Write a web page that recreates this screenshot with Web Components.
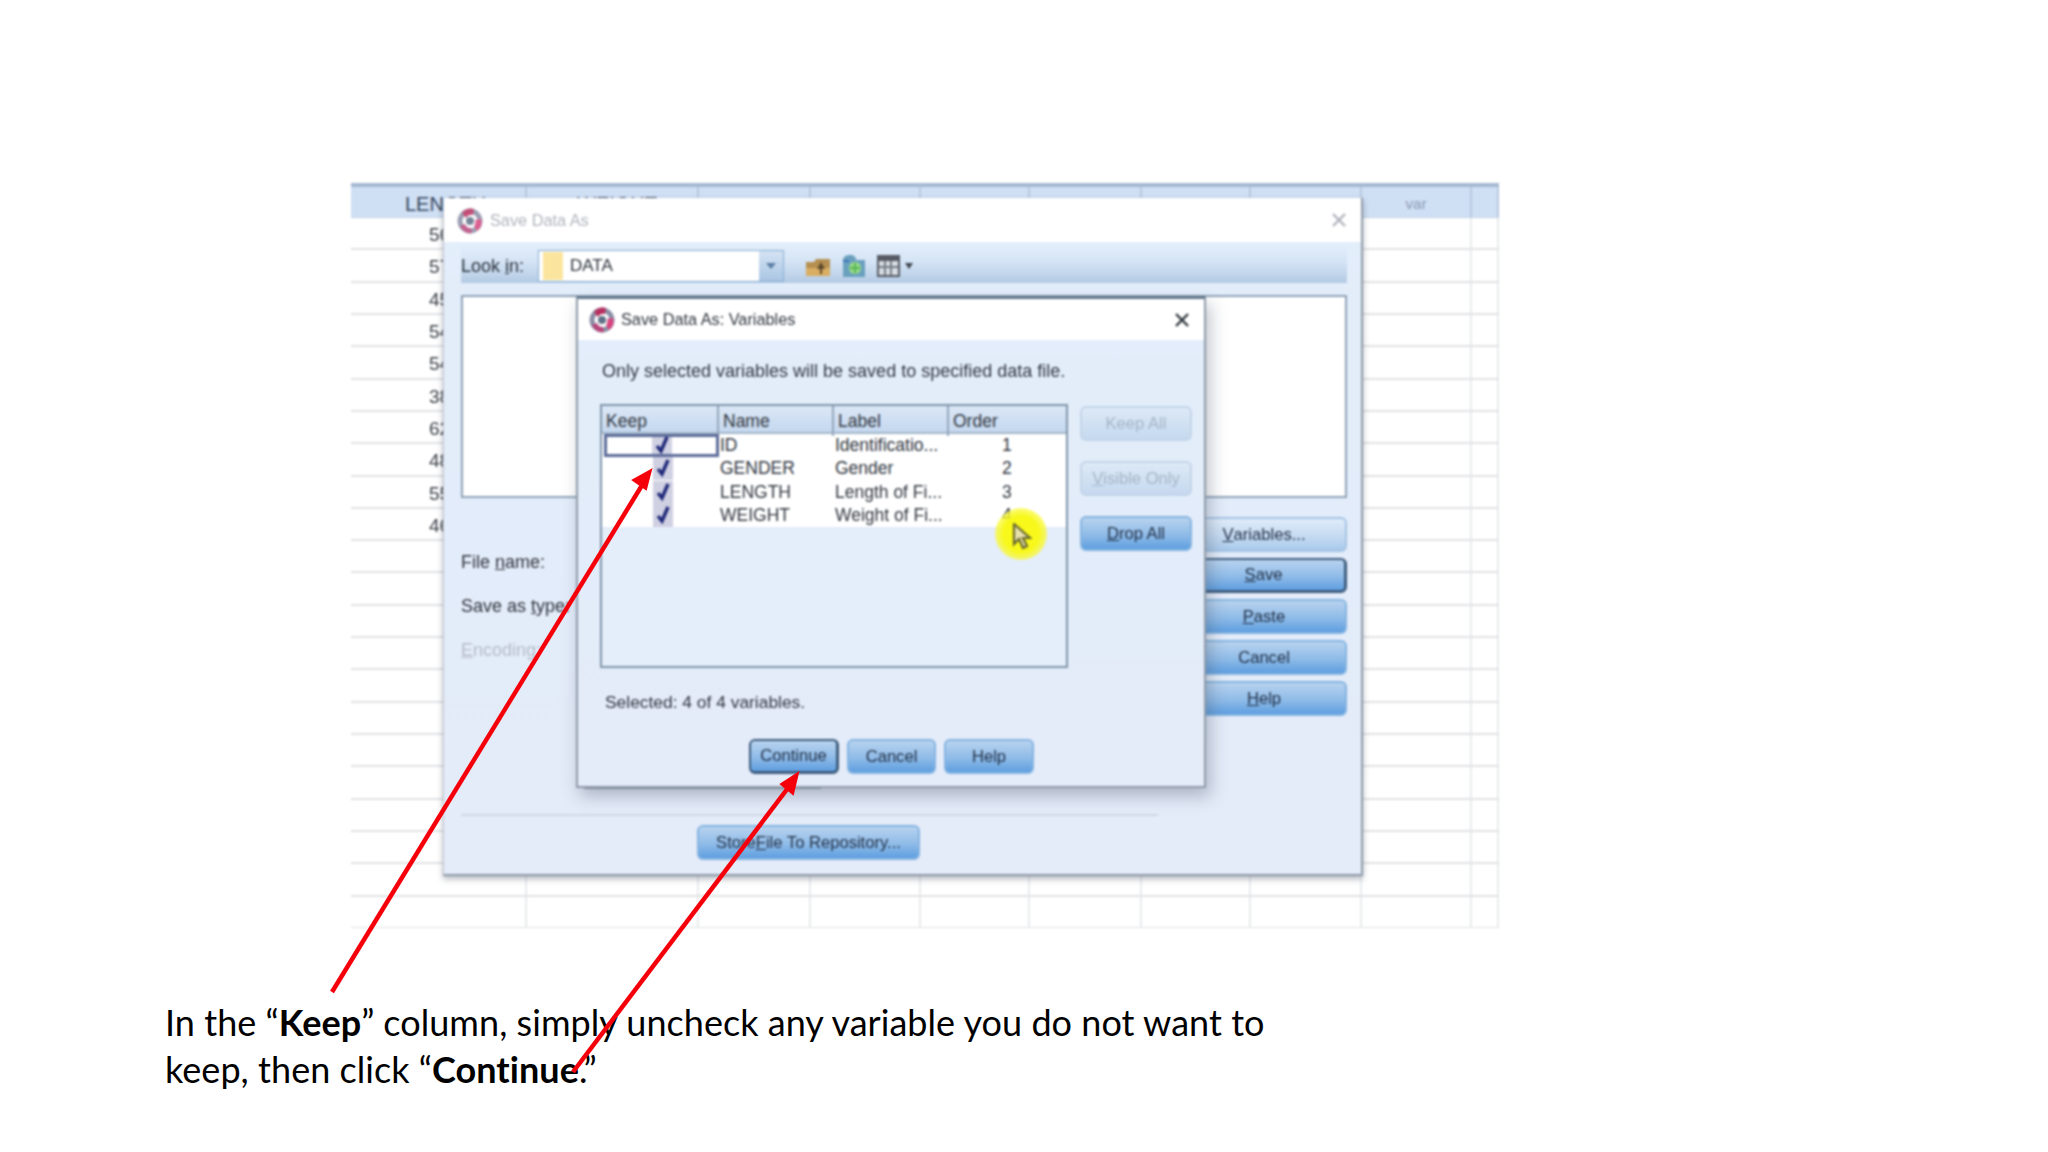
<!DOCTYPE html>
<html>
<head>
<meta charset="utf-8">
<title>Save Data As</title>
<style>
  html, body { margin: 0; height: 1152px; overflow: hidden; background: #fff; }
</style>
</head>
<body>
<slide-page>
  <screen-shot>
    <sheet-grid></sheet-grid>
    <spss-window x="92" y="15" w="920" h="678" heading="Save Data As" dim>
      <look-in-bar></look-in-bar>
      <div style="height:203px;margin:12px 14px 0 17px;background:#fff;border:2px solid #8fa2b6;box-sizing:border-box"></div>
      <div style="display:flex;justify-content:space-between;height:316px;margin:0 14px 0 17px;box-sizing:border-box;padding-top:19px">
        <div style="font-size:18px;line-height:22px;color:#2c323b">
          <div style="margin-top:34px">File <u>n</u>ame:</div>
          <div style="margin-top:22px">Save as <u>t</u>ype:</div>
          <div style="margin-top:22px;color:#b4bcc8"><u>E</u>ncoding:</div>
          <div style="margin:125px 0 0 123px;width:237px;height:3px;background:#5a6068;opacity:.55"></div>
        </div>
        <div style="display:flex;flex-direction:column;gap:6px;width:166px">
          <spss-button kind="light"><u>V</u>ariables...</spss-button>
          <spss-button kind="focus"><u>S</u>ave</spss-button>
          <spss-button><u>P</u>aste</spss-button>
          <spss-button>Cancel</spss-button>
          <spss-button><u>H</u>elp</spss-button>
        </div>
      </div>
      <div style="margin:0 0 0 17px;width:697px;border-top:2px solid #d0d8e4"></div>
      <spss-button style="width:223px;margin:9px 0 0 253px">Store <u>F</u>ile To Repository...</spss-button>
    </spss-window>
    <spss-window x="225" y="113" w="630" h="492" heading="Save Data As: Variables">
      <div style="padding:20px 0 0 24px;font-size:17.4px;line-height:22px;color:#30363f">
        <div style="font-size:18px">Only selected variables will be saved to specified data file.</div>
        <div style="display:flex;gap:12px;margin:22px 0 0 -2px">
          <var-table style="width:468px;height:264px"></var-table>
          <div style="display:flex;flex-direction:column;gap:20px;width:112px;padding-top:2px">
            <spss-button kind="off">Keep All</spss-button>
            <spss-button kind="off"><u>V</u>isible Only</spss-button>
            <spss-button><u>D</u>rop All</spss-button>
          </div>
        </div>
        <div style="margin:23px 0 0 3px">Selected: 4 of 4 variables.</div>
        <div style="display:flex;gap:8px;margin:26px 0 0 147px">
          <spss-button kind="focus" style="width:90px">Continue</spss-button>
          <spss-button style="width:89px">Cancel</spss-button>
          <spss-button style="width:90px">Help</spss-button>
        </div>
      </div>
    </spss-window>
    <mouse-spot></mouse-spot>
  </screen-shot>
  <slide-caption>In the “<b>Keep</b>” column, simply uncheck any variable you do not want to<br>keep, then click “<b>Continue</b>.”</slide-caption>
  <red-arrows></red-arrows>
</slide-page>

<script>
const logoSvg = `<svg width="26" height="27" viewBox="0 0 26 27">
  <circle cx="13" cy="14" r="10" fill="none" stroke="#8b8fa6" stroke-width="5"/>
  <path d="M5 6a12 12 0 0 1 12-4l-1 6a7 7 0 0 0-7 3z" fill="#b8305f"/>
  <path d="M24 12a11 11 0 0 1-4 12l-3-5a6 6 0 0 0 1-6z" fill="#d7457f"/>
  <path d="M3 19a11 11 0 0 0 12 7l-1-5a6 6 0 0 1-6-4z" fill="#b9477c"/>
  <circle cx="13" cy="14" r="4" fill="#5f7189"/>
</svg>`;

class SlidePage extends HTMLElement {
  constructor() {
    super();
    this.attachShadow({ mode: 'open' }).innerHTML = `
      <style>
        :host { display: block; position: relative; width: 2048px; height: 1152px; padding-top: 183px; box-sizing: border-box;
          font-family: "Liberation Sans", Arial, sans-serif; }
      </style>
      <slot></slot>`;
  }
}

class ScreenShot extends HTMLElement {
  constructor() {
    super();
    this.attachShadow({ mode: 'open' }).innerHTML = `
      <style>
        :host { display: block; position: relative; width: 1148px; height: 745px; margin-left: 351px; overflow: hidden; filter: blur(0.9px); }
      </style>
      <slot></slot>`;
  }
}

class SheetGrid extends HTMLElement {
  constructor() {
    super();
    const widths = [176, 172, 112, 110, 109, 112, 109, 111, 110, 27];
    const values = ['56', '57', '45', '54', '54', '38', '62', '48', '55', '46'];
    let head = '';
    widths.forEach((w, i) => {
      let txt = '';
      if (i == 0) txt = '<span style="margin-left:54px;font-size:20px;color:#36465c">LENGTH</span>';
      if (i == 1) txt = '<span style="margin-left:50px;font-size:20px;color:#36465c">WEIGHT</span>';
      if (i == 8) txt = '<span style="display:block;text-align:center;font-size:15px;color:#8d9db2">var</span>';
      head += `<div class="h" style="width:${w}px">${txt}</div>`;
    });
    let rows = '';
    for (let r = 0; r < 22; r++) {
      let cells = '';
      widths.forEach((w, i) => {
        const v = i == 0 && values[r] ? `<span>${values[r]}</span>` : '';
        cells += `<div class="c" style="width:${w}px">${v}</div>`;
      });
      rows += `<div class="r">${cells}</div>`;
    }
    this.attachShadow({ mode: 'open' }).innerHTML = `
      <style>
        :host { display: block; }
        .top { display: flex; height: 30px; border-top: 4px solid #a5b8d2; background: #cfdff4; border-bottom: 1px solid #c2d2e6; }
        .h { box-sizing: border-box; border-right: 2px solid #b8c9df; line-height: 34px; white-space: nowrap; overflow: hidden; }
        .r { display: flex; height: 32.32px; box-sizing: border-box; border-bottom: 2px solid #e0e2e5; }
        .c { box-sizing: border-box; border-right: 2px solid #e9ebee; font-size: 19px; color: #3a3f47; line-height: 34px; }
        .c span { margin-left: 78px; }
      </style>
      <div class="top">${head}</div>${rows}`;
  }
}

class SpssWindow extends HTMLElement {
  constructor() {
    super();
    this.attachShadow({ mode: 'open' }).innerHTML = `
      <style>
        :host { display: block; position: absolute; box-sizing: border-box; background: linear-gradient(#e3eefb, #e4ebf9);
          border: 2px solid #8f9ba9; border-top: 3px solid #64798d; box-shadow: 4px 8px 16px rgba(70, 80, 100, .35); }
        :host([dim]) { border-top: 0; border-left: 1px solid #c0c6d0; box-shadow: 0 3px 6px rgba(70, 80, 100, .4); }
        .bar { display: flex; align-items: center; height: 41px; padding: 0 14px 0 11px; background: #fff; gap: 6px; font-size: 16.3px; color: #30363f; }
        :host([dim]) .bar { height: 44px; padding: 0 14px 0 13px; color: #b0b4bc; gap: 7px; }
        :host([dim]) .logo { opacity: .85; }
        .x { margin-left: auto; }
        .logo { display: flex; }
      </style>
      <div class="bar">
        <span class="logo">${logoSvg}</span>
        <span id="t"></span>
        <svg class="x" width="16" height="16" viewBox="0 0 16 16"><path d="M2 2L14 14M14 2L2 14" fill="none" stroke-width="2.4" stroke="currentColor"/></svg>
      </div>
      <slot></slot>`;
  }
  connectedCallback() {
    this.style.left = this.getAttribute('x') + 'px';
    this.style.top = this.getAttribute('y') + 'px';
    this.style.width = this.getAttribute('w') + 'px';
    this.style.height = this.getAttribute('h') + 'px';
    this.shadowRoot.getElementById('t').textContent = this.getAttribute('heading');
  }
}

class LookInBar extends HTMLElement {
  constructor() {
    super();
    this.attachShadow({ mode: 'open' }).innerHTML = `
      <style>
        :host { display: flex; align-items: center; height: 39px; margin: 2px 14px 0 17px; box-sizing: border-box;
          background: linear-gradient(#e3eefb 0%, #d5e4f5 45%, #b3cae3 100%); font-size: 18px; color: #2c323b; }
        .lab { width: 77px; flex: none; box-sizing: border-box; margin-top: 5px; }
        .combo { display: flex; align-items: center; width: 246px; height: 32px; box-sizing: border-box; margin-top: 5px; border: 1px solid #89aed3;
          background: #fff; font-size: 17px; }
        .folder { width: 20px; height: 28px; margin: 0 7px 0 4px; background: #fbe59e; }
        .arr { margin-left: auto; width: 24px; height: 100%; display: flex; align-items: center; justify-content: center;
          background: linear-gradient(#d5e4f4, #a9c5e3); }
        .arr i { border: 5px solid transparent; border-top: 6px solid #5a7da3; margin-top: 4px; }
        svg { flex: none; margin-top: 5px; }
      </style>
      <div class="lab">Look <u>i</u>n:</div>
      <div class="combo"><div class="folder"></div>DATA<div class="arr"><i></i></div></div>
      <svg width="26" height="24" viewBox="0 0 26 24" style="margin-left:21px">
        <path d="M1 8h8l2-3h14v17H1z" fill="#b58f4f"/><path d="M1 14h24v8H1z" fill="#d9ad62"/><path d="M12 15l4-7 4 7h-3v5h-2v-5z" fill="#5d4a2c"/>
      </svg>
      <svg width="26" height="24" viewBox="0 0 26 24" style="margin-left:10px">
        <path d="M2 6c0-3 3-5 7-5s6 2 6 5h9v17H2z" fill="#6aa0bd"/><path d="M2 6h6v2H2z" fill="#3f78c0"/><circle cx="14" cy="14" r="6" fill="#9fe08a"/><path d="M14 9v10M9 14h10" stroke="#5cb85c" stroke-width="2.5"/>
      </svg>
      <svg width="23" height="24" viewBox="0 0 23 24" style="margin-left:10px">
        <rect x="0" y="1" width="23" height="22" fill="#565b66"/><rect x="2" y="7" width="19" height="14" fill="#d8dde3"/><path d="M8 7v14M14 7v14M2 13h19" stroke="#767c86" stroke-width="2"/>
      </svg>
      <svg width="8" height="6" viewBox="0 0 8 6" style="margin-left:5px"><path d="M0 0h8L4 6z" fill="#3e434c"/></svg>`;
  }
}

class SpssButton extends HTMLElement {
  constructor() {
    super();
    this.attachShadow({ mode: 'open' }).innerHTML = `
      <style>
        :host { display: flex; align-items: center; justify-content: center; height: 35px; box-sizing: border-box; flex: none;
          border: 2px solid #84b4e0; border-radius: 6px; background: linear-gradient(#b8d3ef, #8fbbe8 55%, #5f9fe0);
          font-size: 16.6px; color: #1f2e44; white-space: nowrap; }
        :host([kind=light]) { background: linear-gradient(#dfecfa, #c3d9f1 60%, #a9caec); border-color: #a4c3e3; }
        :host([kind=focus]) { border-color: #3e5d7e; border-width: 2px 3px 3px 2px; }
        :host([kind=off]) { background: linear-gradient(#dde9f6, #c5d9ef); border-color: #c3d5e8; color: #a4b5c8; }
      </style>
      <slot></slot>`;
  }
}

class VarTable extends HTMLElement {
  constructor() {
    super();
    const vars = [
      ['ID', 'Identificatio...', '1'],
      ['GENDER', 'Gender', '2'],
      ['LENGTH', 'Length of Fi...', '3'],
      ['WEIGHT', 'Weight of Fi...', '4'],
    ];
    const tick = `<svg width="20" height="23" viewBox="0 0 20 23"><rect width="20" height="23" fill="#cfd0e2"/><path d="M5 12l4 5 6-14" fill="none" stroke="#1d2778" stroke-width="3.4"/></svg>`;
    const rows = vars.map((v, i) => `
      <div class="row">
        <div class="keep ${i == 0 ? 'cur' : ''}">${tick}</div>
        <div class="t">${v[0]}</div>
        <div class="t">${v[1]}</div>
        <div class="n">${v[2]}</div>
      </div>`).join('');
    this.attachShadow({ mode: 'open' }).innerHTML = `
      <style>
        :host { display: block; flex: none; box-sizing: border-box; border: 2px solid #7f95aa; background: #e4edfa; overflow: hidden; font-size: 17.5px; color: #30363f; }
        .head { display: grid; grid-template-columns: 117px 115px 115px 1fr; height: 26px; line-height: 30px; font-size: 17.5px; background: linear-gradient(#dbe7f6, #c5d8ef); border-bottom: 2px solid #a3b6c9; }
        .head div { padding-left: 4px; border-right: 2px solid #93a7bb; }
        .body { background: #fff; height: 93px; }
        .row { display: grid; grid-template-columns: 117px 115px 115px 1fr; height: 23.4px; line-height: 23px; }
        .keep { display: flex; justify-content: center; box-sizing: border-box; padding-left: 4px; }
        .keep.cur { margin-left: 2px; padding-left: 0; border: 3px solid #5c6b99; align-items: center; overflow: hidden; }
        .t { padding-left: 1px; white-space: nowrap; }
        .n { padding-left: 53px; }
      </style>
      <div class="head"><div>Keep</div><div>Name</div><div>Label</div><div style="border-right:0">Order</div></div>
      <div class="body">${rows}</div>`;
  }
}

class MouseSpot extends HTMLElement {
  constructor() {
    super();
    this.attachShadow({ mode: 'open' }).innerHTML = `
      <style>
        :host { display: block; position: absolute; left: 644px; top: 325px; width: 52px; height: 52px; border-radius: 50%;
          background: radial-gradient(#f8f81a 0 48%, rgba(250, 250, 60, .55) 76%, rgba(255, 255, 120, 0) 100%); }
        svg { position: absolute; left: 17px; top: 15px; }
      </style>
      <svg width="20" height="27" viewBox="0 0 20 27"><path d="M2 1v20l5-5 4 9 4-2-4-8h7z" fill="#e8e2ac" stroke="#6b6a30" stroke-width="2.2"/></svg>`;
  }
}

class SlideCaption extends HTMLElement {
  constructor() {
    super();
    this.attachShadow({ mode: 'open' }).innerHTML = `
      <style>
        :host { display: block; margin: 71px 0 0 165px; font: 36px/47px Lato, "Open Sans", sans-serif; color: #000; letter-spacing: .04px; font-variant-ligatures: none; white-space: nowrap; }
      </style>
      <slot></slot>`;
  }
}

class RedArrows extends HTMLElement {
  constructor() {
    super();
    this.attachShadow({ mode: 'open' }).innerHTML = `
      <style>
        :host { display: block; position: absolute; left: 0; top: 0; width: 2048px; height: 1152px; pointer-events: none; }
      </style>
      <svg width="2048" height="1152" viewBox="0 0 2048 1152">
        <path d="M332 992L644 482" fill="none" stroke="#f5000a" stroke-width="4.5"/>
        <path d="M651 470L633 480L646 489z" fill="#f5000a" stroke="#f5000a" stroke-width="2"/>
        <path d="M573 1072L791 784" fill="none" stroke="#f5000a" stroke-width="4.5"/>
        <path d="M798 773L781 784L793 794z" fill="#f5000a" stroke="#f5000a" stroke-width="2"/>
      </svg>`;
  }
}

customElements.define('slide-page', SlidePage);
customElements.define('screen-shot', ScreenShot);
customElements.define('sheet-grid', SheetGrid);
customElements.define('spss-window', SpssWindow);
customElements.define('look-in-bar', LookInBar);
customElements.define('spss-button', SpssButton);
customElements.define('var-table', VarTable);
customElements.define('mouse-spot', MouseSpot);
customElements.define('slide-caption', SlideCaption);
customElements.define('red-arrows', RedArrows);
</script>
</body>
</html>
